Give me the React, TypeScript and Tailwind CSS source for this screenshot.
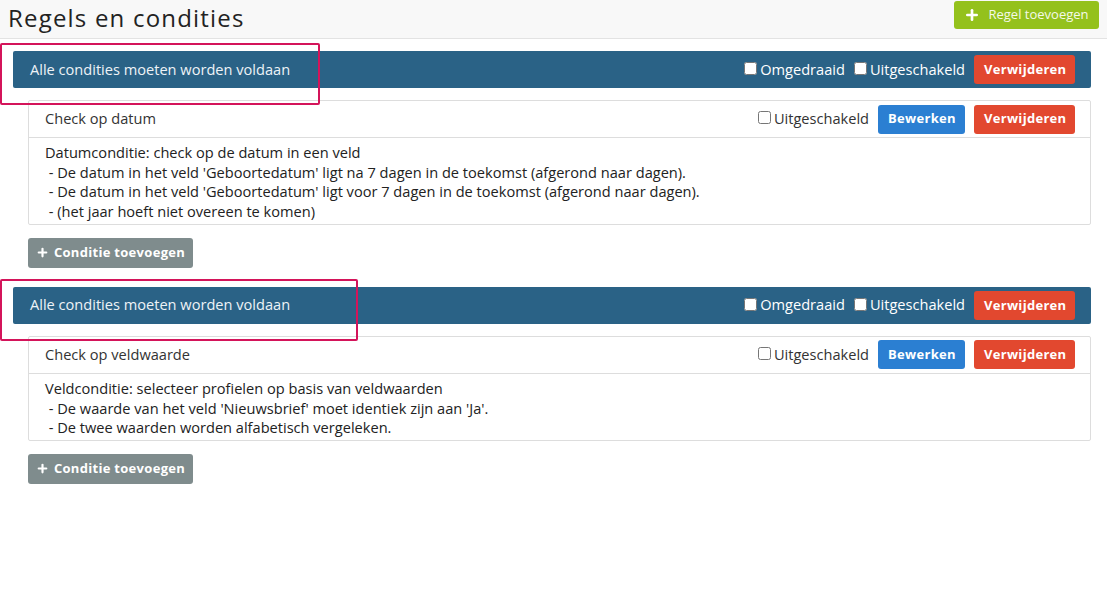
import { Plus } from 'lucide-react';

type Condition = {
  title: string;
  lines: string[];
};

const rules: { conditions: Condition[]; annotationWidth: string }[] = [
  {
    annotationWidth: 'w-[320px]',
    conditions: [
      {
        title: 'Check op datum',
        lines: [
          'Datumconditie: check op de datum in een veld',
          " - De datum in het veld 'Geboortedatum' ligt na 7 dagen in de toekomst (afgerond naar dagen).",
          " - De datum in het veld 'Geboortedatum' ligt voor 7 dagen in de toekomst (afgerond naar dagen).",
          ' - (het jaar hoeft niet overeen te komen)',
        ],
      },
    ],
  },
  {
    annotationWidth: 'w-[358px]',
    conditions: [
      {
        title: 'Check op veldwaarde',
        lines: [
          'Veldconditie: selecteer profielen op basis van veldwaarden',
          " - De waarde van het veld 'Nieuwsbrief' moet identiek zijn aan 'Ja'.",
          ' - De twee waarden worden alfabetisch vergeleken.',
        ],
      },
    ],
  },
];

function Check({ label, dark }: { label: string; dark?: boolean }) {
  return (
    <label className={`flex items-center text-[14.6px] ${dark ? 'text-white' : 'text-[#333]'}`}>
      <input type="checkbox" className="w-[13px] h-[13px] mr-[3px] mt-[-2px]" />
      {label}
    </label>
  );
}

function Btn({ children, color }: { children: string; color: 'red' | 'blue' }) {
  return (
    <button
      className={`h-[29px] px-[10px] rounded-[3px] text-white text-[13px] font-bold tracking-[0.3px] ${
        color === 'red' ? 'bg-[#e2482f] w-[101px]' : 'bg-[#2b7fd2] w-[87px]'
      }`}
    >
      {children}
    </button>
  );
}

function ConditionCard({ c }: { c: Condition }) {
  return (
    <div className="ml-[28px] mr-[16px] border border-[#dddddd] rounded-[2px] bg-white">
      <div className="h-[37px] flex items-center justify-between pl-[16px] pr-[15px] border-b border-[#dddddd]">
        <span className="text-[14.6px] text-[#333]">{c.title}</span>
        <div className="flex items-center gap-[9px]">
          <Check label="Uitgeschakeld" />
          <Btn color="blue">Bewerken</Btn>
          <Btn color="red">Verwijderen</Btn>
        </div>
      </div>
      <div className="pl-[16px] pt-[5px] pb-[2px] text-[14.6px] leading-[19.7px] text-[#222] whitespace-pre">
        {c.lines.map((l, i) => (
          <div key={i}>{l}</div>
        ))}
      </div>
    </div>
  );
}

function App() {
  return (
    <div className="w-full min-h-[602px] bg-white" style={{ fontFamily: '"Open Sans", "Liberation Sans", sans-serif' }}>
      {/* header */}
      <header className="h-[39px] bg-[#f8f8f8] border-b border-[#e3e3e3] flex items-start justify-between pl-[8px] pr-[8px]">
        <h1 className="text-[24px] leading-[36px] tracking-[1.2px] text-[#222]">Regels en condities</h1>
        <button className="mt-[1px] h-[28px] w-[145px] rounded-[3px] bg-[#94c11c] text-white text-[13px] flex items-center justify-center gap-[8px]">
          <Plus size={16} strokeWidth={4} />
          <span className="text-[#f4f9e8]">Regel toevoegen</span>
        </button>
      </header>

      <main className="pt-[12px]">
        {rules.map((r, idx) => (
          <section key={idx} className={idx > 0 ? 'mt-[19px]' : ''}>
            <div className="relative">
              <div className="ml-[13px] mr-[16px] h-[37px] bg-[#2a6286] rounded-[2px] flex items-center justify-between pl-[17px] pr-[16px]">
                <span className="text-[14.6px] text-[#eef3f7]">Alle condities moeten worden voldaan</span>
                <div className="flex items-center gap-[9px]">
                  <Check label="Omgedraaid" dark />
                  <Check label="Uitgeschakeld" dark />
                  <Btn color="red">Verwijderen</Btn>
                </div>
              </div>
              {/* annotation box */}
              <div
                className={`absolute left-0 top-[-8px] h-[62px] ${r.annotationWidth} border-2 border-[#d4145a] rounded-[2px] pointer-events-none`}
              />
            </div>
            <div className="mt-[12px]">
              {r.conditions.map((c, i) => (
                <ConditionCard key={i} c={c} />
              ))}
            </div>
            <button className="mt-[13px] ml-[28px] h-[30px] w-[165px] rounded-[3px] bg-[#7f8c8d] text-white text-[13px] font-bold tracking-[0.3px] flex items-center justify-center gap-[5px]">
              <Plus size={13} strokeWidth={4} />
              Conditie toevoegen
            </button>
          </section>
        ))}
      </main>
    </div>
  );
}

export default App;
